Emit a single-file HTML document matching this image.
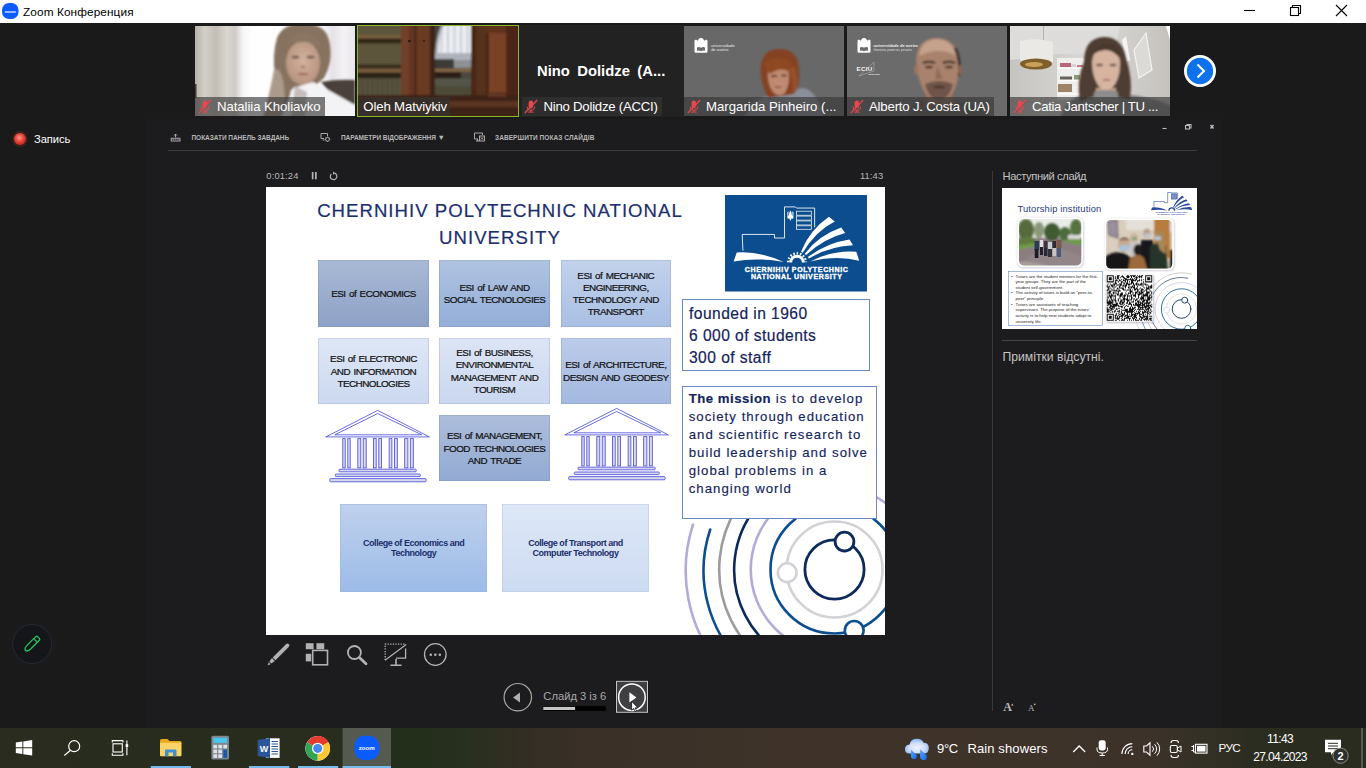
<!DOCTYPE html>
<html lang="uk">
<head>
<meta charset="utf-8">
<title>Zoom Конференция</title>
<style>
*{box-sizing:border-box;margin:0;padding:0}
html,body{width:1366px;height:768px;overflow:hidden;background:#1a1a1a;font-family:"Liberation Sans",sans-serif;}
.abs{position:absolute}
#titlebar{left:0;top:0;width:1366px;height:23px;background:#fff}
#titlebar .ttl{left:23px;top:4.5px;font-size:11.8px;letter-spacing:0.1px;color:#000;white-space:nowrap;line-height:15px}
#zoomarea{left:0;top:23px;width:1366px;height:705px;background:#1a1a1a}
.thumb{top:26px;width:160px;height:90px;overflow:hidden;background:#222}
.thumb .nm{left:0;bottom:0;height:19px;background:rgba(53,53,53,.64);color:#fff;font-size:13.2px;line-height:19px;white-space:nowrap;padding-left:22px;padding-right:4px}
.thumb .nm.nomic{padding-left:5px}
.thumb .mic{left:3.4px;bottom:2px;width:14px;height:15px}
#pv{left:146px;top:119px;width:1076px;height:609px;background:#1c1b1e}
.tb{color:#b6b6b6;font-size:6.5px;font-weight:bold;white-space:nowrap;line-height:10px;top:132.6px;letter-spacing:-0.05px}
#slide{left:265.5px;top:187px;width:619px;height:448px;background:#fff;overflow:hidden}
.box{-webkit-text-stroke:0.22px #111;padding-top:1.5px;word-spacing:1.2px;box-shadow:inset 0 0 0 0.6px rgba(90,110,160,.3);display:flex;align-items:center;justify-content:center;text-align:center;color:#111;font-size:9.9px;line-height:12.3px;letter-spacing:-0.52px}
.col{display:flex;align-items:center;justify-content:center;text-align:center;color:#1b2e6a;font-weight:bold;font-size:9px;line-height:10.6px;letter-spacing:-0.47px}
#taskbar{left:0;top:728px;width:1366px;height:40px;background:linear-gradient(90deg,#292c1e 0%,#282d1e 25%,#232e1b 30%,#27301e 34%,#332e24 38.500%,#3a3027 43%,#3f3329 60%,#3d3229 84%,#343026 88%,#2b2d21 92%,#292c1f 100%)}
</style>
</head>
<body>
<!-- TITLE BAR -->
<div id="titlebar" class="abs">
  <svg class="abs" style="left:2px;top:3px" width="17" height="17" viewBox="0 0 17 17"><rect x="0" y="0" width="16.5" height="16" rx="7" fill="#0b5cff"/><text x="8.2" y="9.6" font-size="4.2" font-weight="bold" fill="#fff" text-anchor="middle" font-family="Liberation Sans, sans-serif">zoom</text></svg>
  <div class="abs ttl">Zoom Конференция</div>
  <svg class="abs" style="left:1240px;top:0" width="126" height="23" viewBox="0 0 126 23"><g stroke="#000" stroke-width="1.1" fill="none"><path d="M4 10.5H15"/><rect x="50.5" y="7.5" width="8" height="8"/><path d="M52.5 7.5V5.5H60.500V13.5H58.5"/><path d="M96 5L107 16M107 5L96 16"/></g></svg>
</div>
<div id="zoomarea" class="abs"></div>
<!--THUMBS-->
<svg width="0" height="0" style="position:absolute"><defs>
<filter id="b1" x="-20%" y="-20%" width="140%" height="140%"><feGaussianBlur stdDeviation="1.2"/></filter>
<filter id="b2" x="-20%" y="-20%" width="140%" height="140%"><feGaussianBlur stdDeviation="2.2"/></filter>
<filter id="b05" x="-20%" y="-20%" width="140%" height="140%"><feGaussianBlur stdDeviation="0.5"/></filter>
<symbol id="mic" viewBox="0 0 14 15"><g fill="#e8474c"><rect x="4.6" y="1.6" width="4.6" height="8" rx="2.3"/><path d="M2.6 7.5a4.3 4.3 0 0 0 8.600 0h-1a3.300 3.300 0 0 1-6.600 0z"/><rect x="6.400" y="11" width="1" height="2"/><rect x="4.200" y="12.600" width="5.400" height="1"/></g><path d="M0.800 14L13.200 1" stroke="#e8474c" stroke-width="1.200"/><path d="M1.600 14.800L14 1.800" stroke="#555" stroke-width="0.700" opacity=".6"/></symbol>
<symbol id="castle" viewBox="0 0 14 15"><path d="M0.500 2.500L2 1.500L3.500 2.800L5.500 0.200L7 0L8.500 0.200L10.500 2.800L12 1.500L13.500 2.500V13.500Q13.500 14.800 12 14.800H2Q0.500 14.800 0.500 13.500Z" fill="#fff"/><path d="M3 9.500Q5 8.600 7 9.800Q9 8.600 11 9.500V12.800Q9 12 7 13.200Q5 12 3 12.800Z" fill="#6a6a6a"/></symbol>
</defs></svg>
<!-- thumb1 -->
<div class="abs thumb" style="left:195px">
<svg class="abs" style="left:0;top:0" width="160" height="90" viewBox="0 0 160 90">
<defs><linearGradient id="t1bg" x1="0" x2="1" y1="0" y2="0"><stop offset="0" stop-color="#b7b1a9"/><stop offset=".06" stop-color="#d3cfc9"/><stop offset=".13" stop-color="#c3bdb5"/><stop offset=".2" stop-color="#d9d5cf"/><stop offset=".25" stop-color="#cfcac6"/><stop offset=".3" stop-color="#f6f5f6"/><stop offset=".36" stop-color="#fefefe"/><stop offset=".78" stop-color="#fdfdfe"/><stop offset=".86" stop-color="#e6e2e8"/><stop offset=".93" stop-color="#f4f2f5"/><stop offset="1" stop-color="#e9e6ea"/></linearGradient>
<radialGradient id="t1f" cx=".5" cy=".45" r=".6"><stop offset="0" stop-color="#d2b19c"/><stop offset="1" stop-color="#b4917d"/></radialGradient></defs>
<rect width="160" height="90" fill="url(#t1bg)"/>
<g filter="url(#b1)">
<path d="M126 56Q142 53 160 54V80L136 68Z" fill="#4a413a"/>
<path d="M82 12Q88 -3 108 -2Q130 -3 134 14Q139 34 129 52L120 60L96 64L92 92H76Q78 70 80 50Q77 28 82 12Z" fill="#86725e"/>
<path d="M79 44Q86 40 89 60L91 92H68Q74 70 79 44Z" fill="#ab9a8c"/>
<ellipse cx="108" cy="37" rx="17" ry="22" fill="url(#t1f)"/>
<path d="M90 22Q96 6 110 6Q124 8 127 24Q118 14 108 16Q98 15 90 22Z" fill="#8a7662"/>
<path d="M98 62L118 56L128 61L160 79V92H86Z" fill="#f3f2f4"/>
<path d="M100 60L112 66L110 92H96Z" fill="#c5bebb"/>
<ellipse cx="100.500" cy="31" rx="4" ry="1.600" fill="#5c463c" opacity=".75"/><ellipse cx="115.500" cy="31" rx="4" ry="1.600" fill="#5c463c" opacity=".75"/>
<ellipse cx="108" cy="41" rx="2.500" ry="1.200" fill="#9a7666" opacity=".8"/>
<ellipse cx="108" cy="48" rx="5.500" ry="1.300" fill="#9a6458" opacity=".8"/>
</g>
<rect x="0" y="58" width="1.500" height="14" fill="#4a3c30"/>
</svg>
<div class="abs nm" style="width:130px;letter-spacing:-0.07px">Nataliia Kholiavko</div><svg class="abs mic"><use href="#mic"/></svg>
</div>
<!-- thumb2 -->
<div class="abs" style="left:357px;top:25px;width:162px;height:92px;background:#8ab82a"></div>
<div class="abs thumb" style="left:358.300px;top:26.300px;width:159.400px;height:89.400px">
<svg class="abs" style="left:0;top:0" width="160" height="90" viewBox="0 0 160 90">
<rect width="160" height="90" fill="#4a3826"/>
<defs><pattern id="bk" width="160" height="3.200" patternUnits="userSpaceOnUse"><rect width="160" height="3.200" fill="#625b3f"/><rect y="2.300" width="160" height="0.900" fill="#4a4430"/></pattern>
<pattern id="bk2" width="5" height="30" patternUnits="userSpaceOnUse"><rect width="5" height="30" fill="#57533e"/><rect x="4" width="1" height="30" fill="#454231"/></pattern>
<pattern id="cur" width="6.500" height="40" patternUnits="userSpaceOnUse"><rect width="6.500" height="40" fill="#eceef3"/><rect x="4.500" width="2" height="40" fill="#c9cdd6"/></pattern></defs>
<g filter="url(#b1)">
<rect x="-2" y="-2" width="46" height="74" fill="#564f36"/>
<rect x="-2" y="-2" width="46" height="11" fill="url(#bk)"/>
<rect x="-2" y="9.500" width="46" height="2.800" fill="#806340"/>
<rect x="-2" y="12.500" width="46" height="5" fill="#2e2619"/>
<rect x="-2" y="17.500" width="46" height="21" fill="url(#bk)"/>
<rect x="-2" y="38.500" width="46" height="4.500" fill="#3c3222"/>
<rect x="-2" y="43.300" width="46" height="3" fill="#80623e"/>
<rect x="-2" y="46.500" width="46" height="6" fill="#2c2318"/>
<rect x="-2" y="52.500" width="46" height="18" fill="url(#bk2)"/>
<rect x="74" y="-2" width="44" height="74" fill="#45433a"/>
<path d="M84 -2H114V42H77Q76 14 84 -2Z" fill="#aeb2ba"/>
<path d="M87 -2H114V27H80Q80 10 87 -2Z" fill="url(#cur)"/>
<rect x="76" y="33" width="20" height="9" fill="#3a3a38"/>
<rect x="96" y="34" width="18" height="8" fill="#8e9094"/>
<rect x="75" y="42.800" width="40" height="3" fill="#866844"/>
<rect x="75" y="46" width="28" height="6.500" fill="#2a1e18"/>
<rect x="103" y="46" width="12" height="6.500" fill="#4a4a40"/>
<rect x="75" y="52.500" width="40" height="8" fill="#55564a"/>
<rect x="75" y="60" width="40" height="9" fill="#4e4c38"/>
<rect x="43" y="-2" width="33" height="74" fill="#633620"/>
<rect x="43" y="-2" width="8" height="74" fill="#70412a"/>
<rect x="56" y="-2" width="3" height="74" fill="#4e2a1a"/>
<rect x="59" y="-2" width="13" height="74" fill="#693a23"/>
<rect x="72" y="-2" width="5" height="74" fill="#3e2418"/>
<rect x="113" y="-2" width="50" height="94" fill="#4a2616"/>
<rect x="118" y="-2" width="10" height="74" fill="#55301c"/>
<rect x="131" y="6" width="17" height="64" fill="#794326"/>
<rect x="127" y="-1" width="25" height="8" fill="#5e321e"/>
<rect x="148" y="-2" width="14" height="74" fill="#4c2817"/>
<rect x="-2" y="69" width="164" height="23" fill="#3d2419"/>
<rect x="90" y="75" width="72" height="6" fill="#5a3624"/>
<rect x="130" y="66" width="18" height="5" fill="#5e3520"/>
</g>
<circle cx="51.500" cy="15" r="1.300" fill="#24150e"/><circle cx="66" cy="15" r="1.100" fill="#32200f"/>
</svg>
<div class="abs nm nomic" style="width:91.500px;letter-spacing:-0.14px">Oleh Matviykiv</div>
</div>
<!-- thumb3 -->
<div class="abs" style="left:519px;top:24.500px;width:164.500px;height:92px;background:#222"></div>
<div class="abs thumb" style="left:520px;width:163px;background:#222">
<div class="abs" id="ninob" style="left:17px;top:36px;width:130px;color:#fff;font-weight:bold;font-size:14.800px;line-height:18px;white-space:nowrap;word-spacing:3.300px">Nino Dolidze (A...</div>
<div class="abs nm" style="left:1.500px;width:140px;letter-spacing:-0.24px">Nino Dolidze (ACCI)</div><svg class="abs mic" style="left:4.300px"><use href="#mic"/></svg>
</div>
<!-- thumb4 -->
<div class="abs thumb" style="left:684px;background:#686868">
<svg class="abs" style="left:0;top:0" width="160" height="90" viewBox="0 0 160 90">
<use href="#castle" x="10" y="12" width="14" height="15"/>
<text x="27" y="20.600" font-size="4.200" fill="#e8e8e8" font-family="Liberation Sans, sans-serif">universidade</text>
<text x="27" y="25.200" font-size="4.200" fill="#e8e8e8" font-family="Liberation Sans, sans-serif">de aveiro</text>
<g filter="url(#b1)">
<path d="M66 82Q78 68 96 68L118 62Q132 62 140 92H60Z" fill="#8a8e9a"/>
<path d="M77 38Q80 22 98 23Q113 24 115 42Q117 58 110 68L84 72Q75 54 77 38Z" fill="#854220"/>
<path d="M85 42Q95 35 104 43Q107 56 101 67Q93 73 87 63Q82 52 85 42Z" fill="#c08a72"/>
<path d="M80 38Q90 27 107 36L106 46Q96 40 86 48Z" fill="#8e4824"/>
<ellipse cx="90" cy="50" rx="3.500" ry="1.200" fill="#5a3628" opacity=".8"/><ellipse cx="100" cy="49.500" rx="3" ry="1.200" fill="#5a3628" opacity=".8"/>
<ellipse cx="94" cy="61" rx="3.500" ry="1.100" fill="#8a4a40" opacity=".8"/>
<path d="M104 44Q110 52 108 66L112 66Q116 52 110 40Z" fill="#96502a"/>
</g>
</svg>
<div class="abs nm" style="width:160px">Margarida Pinheiro (...</div><svg class="abs mic"><use href="#mic"/></svg>
</div>
<!-- thumb5 -->
<div class="abs thumb" style="left:847px;background:#6b6b6b">
<svg class="abs" style="left:0;top:0" width="160" height="90" viewBox="0 0 160 90">
<use href="#castle" x="10" y="12" width="14" height="15"/>
<text x="26.500" y="20.500" font-size="4.100" fill="#ededed" font-weight="bold" font-family="Liberation Sans, sans-serif">universidade de aveiro</text>
<text x="26.500" y="25" font-size="4.100" fill="#dcdcdc" font-family="Liberation Sans, sans-serif">theoria poiesis praxis</text>
<text x="9.500" y="45" font-size="6.200" fill="#f4f4f4" font-weight="bold" font-family="Liberation Sans, sans-serif" letter-spacing="0.300">ECIU</text>
<text x="21.500" y="49.200" font-size="2.400" fill="#eee" font-weight="bold" font-family="Liberation Sans, sans-serif">university</text>
<path d="M12 50L27 36V45Z" fill="none" stroke="#ddd" stroke-width="0.350"/>
<g filter="url(#b1)">
<path d="M60 92Q64 76 80 73H104Q124 77 146 92Z" fill="#5c5a58"/>
<path d="M76 60H106L108 80H78Z" fill="#86665a"/>
<path d="M69 34Q70 12 90 12Q110 12 112 36Q113 56 104 70Q92 78 80 70Q70 56 69 34Z" fill="#a8826c"/>
<path d="M72 30Q74 14 90 13Q106 14 109 30Q92 20 72 30Z" fill="#c4a28c"/>
<path d="M76 37Q82 34.500 88 37M96 37Q102 34.500 108 37" stroke="#2e221c" stroke-width="2.200" fill="none"/>
<ellipse cx="82" cy="41" rx="4" ry="1.600" fill="#3a2a22" opacity=".8"/><ellipse cx="102" cy="41" rx="4" ry="1.600" fill="#3a2a22" opacity=".8"/>
<path d="M90 40L88 53H96Z" fill="#8c6854" opacity=".8"/>
<path d="M78 58Q92 52 106 58Q102 74 92 74Q82 74 78 58Z" fill="#6e5448"/>
<ellipse cx="92" cy="61" rx="6" ry="1.300" fill="#4a3026"/>
<path d="M108 22Q114 34 112 50" stroke="#2e2622" stroke-width="2.500" fill="none"/>
<ellipse cx="69" cy="44" rx="2" ry="5" fill="#9a7460"/><ellipse cx="113" cy="44" rx="2" ry="5" fill="#8a6652"/>
</g>
</svg>
<div class="abs nm" style="width:147px;letter-spacing:-0.19px">Alberto J. Costa (UA)</div><svg class="abs mic"><use href="#mic"/></svg>
</div>
<!-- thumb6 -->
<div class="abs thumb" style="left:1010px;background:#cdcbc7">
<svg class="abs" style="left:0;top:0" width="160" height="90" viewBox="0 0 160 90">
<defs><linearGradient id="t6bg" x1="0" x2="1" y1="0" y2="0"><stop offset="0" stop-color="#c6c4c0"/><stop offset=".45" stop-color="#d8d7d4"/><stop offset=".7" stop-color="#d2d0cd"/><stop offset="1" stop-color="#c4c1bd"/></linearGradient></defs>
<rect width="160" height="90" fill="url(#t6bg)"/>
<g filter="url(#b05)">
<path d="M0 0H110L104 28H48L0 34Z" fill="#dddcda"/>
<path d="M156 0H160V14Z" fill="#fff"/>
<path d="M112 14L116 10L120 34L116 36Z" fill="#f4f4f4"/>
<rect x="47" y="32" width="28" height="42" fill="#eeeeec"/>
<rect x="50" y="37" width="11" height="4" fill="#b8667c"/><rect x="61" y="38" width="5" height="3" fill="#d8d4d4"/><rect x="67" y="39" width="6" height="2" fill="#c8788a"/>
<rect x="48" y="41.500" width="26" height="1.500" fill="#fafafa"/>
<rect x="50" y="50.500" width="12" height="3" fill="#6a625a"/><rect x="64" y="49" width="6" height="4.500" fill="#8a9a7a"/><rect x="48" y="54" width="26" height="1.500" fill="#fafafa"/>
<rect x="48" y="58" width="14" height="8" fill="#a08468"/><rect x="64" y="59" width="6" height="7" fill="#f2f2f2"/>
<rect x="48" y="67" width="26" height="1.500" fill="#fafafa"/>
<path d="M124 24L136 7L142 44L129 52Z" fill="#dcdad6" stroke="#f4f3f0" stroke-width="1.200"/>
<path d="M10 15Q26 11 43 16V36Q26 44 10 34Z" fill="#ebe9e5"/>
<ellipse cx="26" cy="38" rx="16" ry="5.500" fill="#7e5e2c"/>
<ellipse cx="24" cy="38.500" rx="9" ry="2.500" fill="#c9a256"/>
<rect x="33" y="0" width="0.800" height="14" fill="#aaa"/>
</g>
<g filter="url(#b1)">
<path d="M50 92Q56 72 76 68H112Q140 70 162 80V92Z" fill="#828180"/>
<path d="M74 36Q74 12 94 11Q112 11 116 32Q123 52 120 74L104 70H84L70 76Q66 54 74 36Z" fill="#4e3c32"/>
<path d="M86 62H106V74H86Z" fill="#c09c88"/>
<path d="M82 36Q84 20 96 20Q110 20 110 38Q110 54 102 62Q96 66 90 62Q82 52 82 36Z" fill="#d6b4a0"/>
<path d="M81 30Q88 16 100 18Q110 20 111 34Q104 24 96 24Q88 24 81 30Z" fill="#4a382e"/>
<ellipse cx="89.500" cy="39" rx="3.500" ry="1.300" fill="#4a362e" opacity=".8"/><ellipse cx="103" cy="39" rx="3.500" ry="1.300" fill="#4a362e" opacity=".8"/>
<ellipse cx="96.500" cy="54" rx="4" ry="1.100" fill="#a0605a" opacity=".8"/>
<path d="M84 66Q96 62 108 66V74H84Z" fill="#8c8c8c"/>
</g>
</svg>
<div class="abs nm" style="width:160px;letter-spacing:-0.35px">Catia Jantscher | TU ...</div><svg class="abs mic"><use href="#mic"/></svg>
</div>
<!-- next arrow -->
<svg class="abs" style="left:1183px;top:54px" width="34" height="34" viewBox="0 0 34 34"><circle cx="17" cy="17" r="16" fill="#fff"/><circle cx="17" cy="17" r="13.200" fill="#0e72ed"/><path d="M14.500 10.500L21 17L14.500 23.500" stroke="#fff" stroke-width="2" fill="none"/></svg>
<!-- recording -->
<svg class="abs" style="left:9.900px;top:129.300px" width="20" height="20" viewBox="0 0 20 20"><defs><radialGradient id="rec" cx=".45" cy=".4" r=".6"><stop offset="0" stop-color="#ff9a8a"/><stop offset=".55" stop-color="#e8473c"/><stop offset="1" stop-color="#b82a20"/></radialGradient></defs><circle cx="10" cy="10" r="8" fill="#7a2a1c" opacity=".35"/><circle cx="10" cy="10" r="6" fill="url(#rec)"/></svg>
<div class="abs" id="rectxt" style="left:34px;top:131.700px;color:#fff;font-size:11.200px;line-height:15px;white-space:nowrap;letter-spacing:-0.1px">Запись</div>
<!-- green pencil -->
<svg class="abs" style="left:12px;top:624px" width="40" height="40" viewBox="0 0 40 40"><circle cx="20.100" cy="19.900" r="19.500" fill="#14161a" stroke="#282e34" stroke-width="0.900"/><g transform="rotate(45 20 20)" fill="none" stroke="#23c55e" stroke-width="1.300" stroke-linejoin="round"><path d="M17.400 12.200Q17.400 10.900 18.700 10.900H21.300Q22.600 10.900 22.600 12.200V24.500Q22.400 28.800 20 29.200Q17.600 28.800 17.400 24.500Z"/><path d="M17.400 15H22.600"/></g></svg>
<!--/THUMBS-->
<!--PV-->
<div id="pv" class="abs"></div>
<!--PVCONTENT-->
<!-- presenter toolbar -->
<svg class="abs" style="left:170px;top:131px" width="12" height="12" viewBox="0 0 12 12"><g fill="none" stroke="#b8b8b8" stroke-width="0.9"><path d="M5.500 6.300V3M4 4.500L5.500 3L7 4.500"/><rect x="1.200" y="7.200" width="8.800" height="2.800"/><path d="M2.500 8.600H4M4.800 8.600H6.300M7.100 8.600H8.600" stroke-width="0.700"/></g></svg>
<div class="abs tb" style="left:191.500px">ПОКАЗАТИ ПАНЕЛЬ ЗАВДАНЬ</div>
<svg class="abs" style="left:320px;top:131px" width="12" height="12" viewBox="0 0 12 12"><g fill="none" stroke="#b8b8b8" stroke-width="0.9"><path d="M4 7.500H1V2.500H7.500V5"/><path d="M2.500 9H4.500"/><circle cx="7.500" cy="8.300" r="1.900"/><path d="M7.500 5.600V6.400M7.500 10.200V11M4.800 8.300H5.600M9.400 8.300H10.200M5.600 6.400L6.100 6.900M9.400 6.400L8.900 6.900M5.600 10.200L6.100 9.700M9.400 10.200L8.900 9.700"/></g></svg>
<div class="abs tb" style="left:341px">ПАРАМЕТРИ ВІДОБРАЖЕННЯ <span style="font-size:7.5px;line-height:5px;position:relative;top:0.3px">▼</span></div>
<svg class="abs" style="left:473px;top:131px" width="13" height="12" viewBox="0 0 13 12"><g fill="none" stroke="#b8b8b8" stroke-width="0.9"><path d="M5 8H1.500V2H9.500V4"/><path d="M3 10H6M4.500 8V10"/><rect x="6.500" y="5" width="5" height="5"/><path d="M7.800 6.300L10.200 8.700M10.200 6.300L7.800 8.700"/></g></svg>
<div class="abs tb" style="left:495px;letter-spacing:0.08px">ЗАВЕРШИТИ ПОКАЗ СЛАЙДІВ</div>
<div class="abs" style="left:168px;top:150px;width:1029px;height:1px;background:#3c3b3f"></div>
<svg class="abs" style="left:1155px;top:120px" width="66" height="14" viewBox="0 0 66 14"><g stroke="#bbb" stroke-width="1.100" fill="none"><path d="M7.500 8.500H11.500"/><rect x="30.500" y="5.500" width="4" height="3.500"/><path d="M32 5.500V4.500H36V8H34.500"/><path d="M55.500 5L58.500 8.500M58.500 5L55.500 8.500" stroke-width="1.400"/></g></svg>
<!-- timer -->
<div class="abs" id="tm1" style="left:266.300px;top:169.450px;color:#b8b8b8;font-size:9.400px;line-height:13px;white-space:nowrap;letter-spacing:0.130px">0:01:24</div>
<svg class="abs" style="left:310px;top:170px" width="30" height="12" viewBox="0 0 30 12"><g fill="#b4b4b4"><rect x="1.800" y="2" width="1.700" height="7.300"/><rect x="5" y="2" width="1.700" height="7.300"/></g><path d="M24.500 3.200A3.300 3.300 0 1 1 21.300 4" fill="none" stroke="#b4b4b4" stroke-width="1.200"/><path d="M23 1.500L25.300 3.300L23 4.800Z" fill="#b4b4b4"/></svg>
<div class="abs" id="tm2" style="left:840px;width:43.300px;text-align:right;top:169.450px;color:#b8b8b8;font-size:9.400px;line-height:13px;white-space:nowrap;letter-spacing:0.130px">11:43</div>
<!--/PVCONTENT-->
<!--SLIDE-->
<div id="slide" class="abs">
<!-- coordinates inside slide: page - (265.500,187) -->
<div class="abs" id="stitle" style="-webkit-text-stroke:0.2px #1c2f6e;left:19.500px;top:10.400px;width:430px;text-align:center;color:#1c2f6e;font-size:18.600px;line-height:27.100px;letter-spacing:1.020px">CHERNIHIV POLYTECHNIC NATIONAL<br>UNIVERSITY</div>
<!-- row1 -->
<div class="abs box" style="left:52.500px;top:73.200px;width:111px;height:66.500px;background:linear-gradient(#a9b9d5,#8ea2c7)"><span>ESI of ECONOMICS</span></div>
<div class="abs box" style="left:173.700px;top:73.200px;width:110.600px;height:66.500px;background:linear-gradient(#b0c3e1,#93aed8)"><span>ESI of LAW AND<br>SOCIAL TECNOLOGIES</span></div>
<div class="abs box" style="left:295px;top:73.200px;width:110.600px;height:66.500px;background:linear-gradient(#c3d2ec,#a9bfe3)"><span>ESI of MECHANIC<br>ENGINEERING,<br>TECHNOLOGY AND<br>TRANSPORT</span></div>
<!-- row2 -->
<div class="abs box" style="left:52.500px;top:151.200px;width:111px;height:65.600px;background:linear-gradient(#dfe7f6,#ccd9f0)"><span>ESI of ELECTRONIC<br>AND INFORMATION<br>TECHNOLOGIES</span></div>
<div class="abs box" style="left:173.700px;top:151.200px;width:110.600px;height:65.600px;background:linear-gradient(#dde5f5,#cad7ef)"><span>ESI of BUSINESS,<br>ENVIRONMENTAL<br>MANAGEMENT AND<br>TOURISM</span></div>
<div class="abs box" style="left:295px;top:151.200px;width:110.600px;height:65.600px;background:linear-gradient(#bccbe8,#a4b9e0)"><span>ESI of ARCHITECTURE,<br>DESIGN AND GEODESY</span></div>
<!-- row3 -->
<div class="abs box" style="left:173.700px;top:228.300px;width:110.600px;height:65.700px;background:linear-gradient(#adbddb,#93aad3)"><span>ESI of MANAGEMENT,<br>FOOD TECHNOLOGIES<br>AND TRADE</span></div>
<!-- temples -->
<svg class="abs" style="left:58px;top:221px" width="108" height="76" viewBox="0 0 108 76">
<defs><g id="temple" fill="none" stroke="#4547d9" stroke-width="0.800">
<path d="M1.800 28.900L53.700 2.400L105.400 28.900Z"/><path d="M10.800 26.800L53.700 5.500L97.700 26.800Z"/>
<g fill="#d8d8ec"><rect x="18.800" y="30.600" width="2.400" height="29.300"/><rect x="23.800" y="30.600" width="2.400" height="29.300"/>
<rect x="33.800" y="30.600" width="3" height="29.300"/><rect x="39.200" y="30.600" width="3" height="29.300"/>
<rect x="49.400" y="30.600" width="2.800" height="29.300"/><rect x="54.800" y="30.600" width="2.800" height="29.300"/>
<rect x="65.100" y="30.600" width="2.800" height="29.300"/><rect x="70.500" y="30.600" width="2.800" height="29.300"/>
<rect x="80.700" y="30.600" width="3.200" height="29.300"/><rect x="86.300" y="30.600" width="3" height="29.300"/>
<rect x="15" y="61.200" width="77.200" height="2.600" rx="0.800"/><rect x="11.300" y="66" width="85" height="2.600" rx="0.800"/><rect x="5.700" y="70.600" width="96.500" height="3.200" rx="1"/></g>
</g></defs><use href="#temple"/></svg>
<svg class="abs" style="left:297.200px;top:219px" width="108" height="76" viewBox="0 0 108 76"><use href="#temple"/></svg>
<!-- colleges -->
<div class="abs col" style="left:74.700px;top:317px;width:147px;height:88.300px;background:linear-gradient(#bfd1ed,#9cbbe8);box-shadow:inset 0 0 0 0.500px #9fb4d8"><span>College of Economics and<br>Technology</span></div>
<div class="abs col" style="left:236.500px;top:317px;width:147px;height:88.300px;background:linear-gradient(#dde7f7,#cddbf2);box-shadow:inset 0 0 0 0.500px #b9c8e4"><span>College of Transport and<br>Computer Technology</span></div>
<!-- circles -->
<svg class="abs" style="left:400px;top:280px" width="219" height="168" viewBox="400 280 219 168">
<g id="circs" fill="none" stroke-width="2.600" stroke-linecap="round">
<circle cx="568.500" cy="382.500" r="83.750" stroke="#b3aad9"/>
<circle cx="568.500" cy="382.500" r="64" stroke="#0c4e90"/>
<circle cx="568.500" cy="382.500" r="48" stroke="#d2d2d6"/>
<circle cx="568.500" cy="382.500" r="29.600" stroke="#0c2b5c" stroke-width="2.800"/>
<circle cx="578.500" cy="354.600" r="9.400" stroke="#0c2b5c" fill="#fff" stroke-width="2.800"/>
<circle cx="521.200" cy="385.700" r="9.400" stroke="#d2d2d6" fill="#fff"/>
<circle cx="588.200" cy="443.400" r="9.400" stroke="#0c4e90" fill="#fff"/>
<path d="M543 286.400A99.400 99.400 0 0 0 520 470" stroke="#0c2b5c"/>
<path d="M520 278A115 115 0 0 0 500 475" stroke="#9c9c9e"/>
<path d="M444.200 342.500A130.600 130.600 0 0 0 480 480" stroke="#0c4e90"/>
<path d="M427 337.600A149 149 0 0 0 455 480" stroke="#b3aad9"/>
</g></svg>
<!-- logo -->
<svg class="abs" style="left:459.500px;top:8.300px" width="142" height="96.500" viewBox="70 37 990 673">
<rect x="70" y="37" width="990" height="673" fill="#0b4d8f"/>
<g fill="none" stroke="#fff" stroke-width="6">
<path d="M195 425L190 312H415V337H485V120H560L568 128H695V262"/>
<g stroke-width="5"><rect x="568" y="150" width="104" height="28"/><rect x="568" y="184" width="104" height="28"/><rect x="568" y="218" width="104" height="28"/><rect x="568" y="252" width="104" height="24"/></g>
</g>
<g fill="#fff">
<path d="M505 155L512 150V185Q518 180 518 160L526 145L534 160Q534 180 540 185V150L547 155V200Q540 205 534 200L526 218L518 200Q512 205 505 200Z"/>
<path d="M130 500L152 438Q300 425 480 505Q300 470 130 500Z"/>
<path d="M600 432Q660 280 795 188L835 222Q700 290 612 440Z"/>
<path d="M625 448Q720 320 880 264L908 302Q760 340 635 455Z"/>
<path d="M648 470Q780 370 938 347L962 388Q800 395 655 480Z"/>
<path d="M665 500Q820 420 985 432L1006 495Q850 455 665 500Z"/>
<path d="M518 508A54 54 0 0 1 626 508L606 508 A34 34 0 0 0 538 508Z"/>
<g stroke="#fff" stroke-width="16" stroke-dasharray="11 12.500"><path d="M510 506A62 62 0 0 1 634 506" fill="none"/></g>
</g>
<text id="lg1" x="570" y="572.500" text-anchor="middle" fill="#fff" font-family="Liberation Sans, sans-serif" font-weight="bold" font-size="49" stroke="#fff" stroke-width="2.500" letter-spacing="4.500">CHERNIHIV POLYTECHNIC</text>
<text id="lg2" x="570" y="622.500" text-anchor="middle" fill="#fff" font-family="Liberation Sans, sans-serif" font-weight="bold" font-size="49" stroke="#fff" stroke-width="2.500" letter-spacing="4.400">NATIONAL UNIVERSITY</text>
</svg>
<!-- info boxes -->
<div class="abs" id="info1" style="left:416.500px;top:112.400px;width:188px;height:71.400px;border:1px solid #6a88c4;background:#fff;color:#14245c;-webkit-text-stroke:0.2px #14245c;font-size:15.600px;line-height:21.800px;letter-spacing:0.450px;padding:2.800px 0 0 6px;white-space:nowrap">founded in 1960<br>6 000 of students<br>300 of staff</div>
<div class="abs" id="info2" style="left:416.700px;top:199.300px;width:194.500px;height:133.200px;border:1px solid #6a88c4;background:#fff;color:#14245c;-webkit-text-stroke:0.15px #14245c;font-size:13.200px;line-height:18px;padding:3px 0 0 5.500px;white-space:nowrap;letter-spacing:1.030px"><b style="letter-spacing:0.5px">The mission</b> is to develop<br>society through education<br>and scientific research to<br>build leadership and solve<br>global problems in a<br>changing world</div>
</div>
<!--/SLIDE-->
<!--RIGHT-->
<div class="abs" style="left:992px;top:171px;width:1px;height:540px;background:#3a393d"></div>
<div class="abs" style="left:1002.500px;top:168.700px;color:#c2c2c2;font-size:11.200px;line-height:15px;letter-spacing:-0.400px;white-space:nowrap" id="nxt">Наступний слайд</div>
<div class="abs" id="nslide" style="left:1002px;top:188px;width:195.300px;height:141px;background:#fff;overflow:hidden">
<!-- coords: page-(1002,188) -->
<div class="abs" id="tut" style="left:15.500px;top:14.300px;color:#2b3a7c;font-size:9.400px;line-height:13px;white-space:nowrap;letter-spacing:0.140px">Tutorship institution</div>
<svg class="abs" style="left:0;top:0" width="195.300" height="141" viewBox="0 0 195.300 141">
<defs><filter id="sh" x="-10%" y="-10%" width="125%" height="125%"><feGaussianBlur stdDeviation="0.900"/></filter>
<clipPath id="p1"><rect x="17" y="31" width="62.300" height="46.400" rx="4.500"/></clipPath>
<clipPath id="p2"><rect x="104.200" y="31.900" width="66" height="48.700" rx="4.500"/></clipPath></defs>
<!-- mini logo -->
<g transform="translate(142.900,-1.140) scale(0.047)" fill="none" stroke="#3556a6" stroke-width="13">
<path d="M195 425L190 312H415V337H485V120H560L568 128H695V262"/>
<rect x="568" y="150" width="104" height="110" fill="#2a4a9a" fill-opacity=".6"/>
<g fill="#2a4a9a" stroke="none"><path d="M130 500L152 438Q300 425 480 505Q300 470 130 500Z"/><path d="M600 432Q660 280 795 188L835 222Q700 290 612 440Z"/><path d="M625 448Q720 320 880 264L908 302Q760 340 635 455Z"/><path d="M648 470Q780 370 938 347L962 388Q800 395 655 480Z"/><path d="M665 500Q820 420 985 432L1006 495Q850 455 665 500Z"/><path d="M498 508A74 74 0 0 1 646 508L618 508 A46 46 0 0 0 526 508Z"/></g>
</g>
<text x="169.500" y="24.700" text-anchor="middle" font-size="2.500" font-weight="bold" fill="#2a4a9a" font-family="Liberation Sans, sans-serif">CHERNIHIV POLYTECHNIC</text>
<text x="169.500" y="27.400" text-anchor="middle" font-size="2.500" font-weight="bold" fill="#2a4a9a" font-family="Liberation Sans, sans-serif">NATIONAL UNIVERSITY</text>
<!-- photo 1 -->
<rect x="15.600" y="29.800" width="66" height="50" rx="5.500" fill="#b9b7c6" filter="url(#sh)" opacity=".8"/>
<rect x="15.400" y="29.400" width="65.500" height="49.600" rx="5.500" fill="#fff"/>
<g clip-path="url(#p1)"><rect x="17" y="31" width="63" height="47" fill="#e9ece8"/>
<g filter="url(#b1)">
<rect x="14" y="50" width="70" height="30" fill="#8b7d80"/>
<path d="M14 78L40 60L58 60L84 70V82H14Z" fill="#938689"/>
<path d="M14 74Q30 72 50 80H14Z" fill="#a89e9a"/>
<ellipse cx="24" cy="42" rx="8" ry="11" fill="#566b3c"/><ellipse cx="37" cy="42" rx="5" ry="8" fill="#8a9a78"/><ellipse cx="50" cy="44" rx="8" ry="9" fill="#3f5a30"/><ellipse cx="63" cy="46" rx="6" ry="7" fill="#4e6a3c"/><ellipse cx="74" cy="40" rx="6" ry="9" fill="#58723f"/>
<ellipse cx="25" cy="54" rx="10" ry="5" fill="#5f7a3c"/>
<path d="M14 58L34 55V58L14 62Z" fill="#6da043"/><path d="M60 52L82 51V58L66 55Z" fill="#6c9c46"/>
<rect x="66" y="47" width="12" height="4" fill="#d8d8d4"/>
</g>
<g filter="url(#b05)"><rect x="32.500" y="53" width="4.500" height="9" fill="#2c3a58"/><rect x="32.800" y="61" width="3.600" height="9" fill="#1c1c22"/><rect x="38" y="52" width="3" height="7" fill="#e0dede"/><rect x="38" y="59" width="3" height="8" fill="#22222a"/><rect x="42" y="53" width="3.500" height="7" fill="#40343a"/><rect x="42" y="60" width="3.500" height="8" fill="#2a2a32"/><rect x="46" y="54" width="4" height="7" fill="#c8ccd8"/><rect x="46" y="61" width="4" height="8" fill="#30303a"/><rect x="50.500" y="53" width="3.500" height="7" fill="#2e2a30"/><rect x="50.500" y="60" width="3.500" height="8" fill="#c8c4c0"/><rect x="54.500" y="52" width="5" height="8" fill="#7a5a48"/><rect x="55" y="60" width="4" height="9" fill="#4a5a7a"/></g>
</g>
<!-- photo 2 -->
<rect x="103" y="30.800" width="69.500" height="52" rx="5.500" fill="#b9b7c6" filter="url(#sh)" opacity=".8"/>
<rect x="102.600" y="30.300" width="69.200" height="51.800" rx="5.500" fill="#fff"/>
<g clip-path="url(#p2)"><rect x="104" y="31" width="67" height="50" fill="#d9cebd"/>
<g filter="url(#b1)">
<rect x="124" y="30" width="30" height="12" fill="#e4e0d8"/>
<rect x="152" y="30" width="16" height="40" fill="#b87c3c"/><rect x="168" y="30" width="4" height="14" fill="#e8e8e4"/>
<path d="M106 33L115 32L116 50L107 47Z" fill="#9a90a0" stroke="#4a4038" stroke-width="0.800"/>
<ellipse cx="132" cy="50" rx="4" ry="5" fill="#cdb49c"/><rect x="128" y="54" width="9" height="14" fill="#c8c8c8"/>
<ellipse cx="145" cy="45" rx="3.500" ry="4.500" fill="#b89c86"/><path d="M139 52H151L152 82H138Z" fill="#16161a"/>
<ellipse cx="156" cy="48" rx="4" ry="5" fill="#caa88c"/><path d="M148 58Q156 52 164 58L166 82H148Z" fill="#27352a"/>
<path d="M152 44Q157 40 162 46L164 66L158 62Z" fill="#a8875a"/>
<ellipse cx="122" cy="57" rx="6" ry="7.500" fill="#c7a98f"/><path d="M116 53Q122 46 129 53Q122 50 116 53Z" fill="#5a4632"/>
<rect x="117.500" y="57" width="10" height="6" rx="2" fill="#a9c4dc"/>
<rect x="153" y="48.500" width="6" height="3.500" rx="1" fill="#b4cce0"/><rect x="143" y="45.500" width="5" height="3" rx="1" fill="#b8cee0"/><rect x="130" y="49" width="5" height="3" rx="1" fill="#7aa47a"/>
<path d="M102 70Q110 62 122 65L130 70L134 84H102Z" fill="#141416"/>
<ellipse cx="136" cy="62" rx="4.500" ry="6" fill="#1e1a1a"/>
<path d="M128 70Q136 64 142 70L146 84H126Z" fill="#9c6a3a"/>
<rect x="168" y="62" width="4" height="20" fill="#1a1a1e"/>
</g></g>
<!-- text box -->
<rect x="6.300" y="83.300" width="94.200" height="54" fill="#fff" stroke="#6a88c4" stroke-width="0.600"/>
<!-- circles mini -->
<g transform="translate(0.200,0.300) scale(0.3155)" fill="none" stroke-width="2.600" stroke-linecap="round">
<circle cx="568.500" cy="382.500" r="83.750" stroke="#b3aad9" stroke-width="1.600"/>
<circle cx="568.500" cy="382.500" r="64" stroke="#0c4e90"/>
<circle cx="568.500" cy="382.500" r="48" stroke="#d2d2d6" stroke-width="2"/>
<circle cx="568.500" cy="382.500" r="29.600" stroke="#0c2b5c" stroke-width="2.800"/>
<circle cx="578.500" cy="354.600" r="9.400" stroke="#0c2b5c" fill="#fff" stroke-width="2.800"/>
<circle cx="521.200" cy="385.700" r="9.400" stroke="#d2d2d6" fill="#fff" stroke-width="2"/>
<circle cx="588.200" cy="443.400" r="9.400" stroke="#0c4e90" fill="#fff"/>
<path d="M588 285A99.400 99.400 0 0 0 520 470" stroke="#0c2b5c" stroke-width="2"/>
<path d="M600 272A115 115 0 0 0 500 475" stroke="#9c9c9e" stroke-width="1.600"/>
<path d="M444.200 342.500A130.600 130.600 0 0 0 480 480" stroke="#0c4e90" stroke-width="2"/>
<path d="M427 337.600A149 149 0 0 0 455 480" stroke="#b3aad9" stroke-width="1.600"/>
</g>
<!-- QR -->
<rect x="104.300" y="87.300" width="47.500" height="47.500" fill="#9a98a8" filter="url(#sh)" opacity=".7"/>
<rect x="103.800" y="86.500" width="47.200" height="47.200" fill="#fff"/>
<g transform="translate(104.700,87.300) scale(1.012)"><path fill="#111" d="M0 0h7v1h-7zM10 0h3v1h-3zM15 0h1v1h-1zM20 0h2v1h-2zM23 0h6v1h-6zM30 0h1v1h-1zM32 0h1v1h-1zM34 0h2v1h-2zM38 0h7v1h-7zM0 1h1v1h-1zM6 1h1v1h-1zM8 1h1v1h-1zM10 1h2v1h-2zM14 1h3v1h-3zM19 1h4v1h-4zM24 1h1v1h-1zM26 1h2v1h-2zM29 1h1v1h-1zM31 1h4v1h-4zM38 1h1v1h-1zM44 1h1v1h-1zM0 2h1v1h-1zM2 2h3v1h-3zM6 2h1v1h-1zM8 2h1v1h-1zM10 2h2v1h-2zM13 2h1v1h-1zM16 2h2v1h-2zM20 2h2v1h-2zM24 2h1v1h-1zM28 2h3v1h-3zM32 2h1v1h-1zM34 2h1v1h-1zM38 2h1v1h-1zM40 2h3v1h-3zM44 2h1v1h-1zM0 3h1v1h-1zM2 3h3v1h-3zM6 3h1v1h-1zM8 3h1v1h-1zM10 3h2v1h-2zM17 3h3v1h-3zM23 3h1v1h-1zM25 3h1v1h-1zM27 3h1v1h-1zM29 3h1v1h-1zM38 3h1v1h-1zM40 3h3v1h-3zM44 3h1v1h-1zM0 4h1v1h-1zM2 4h3v1h-3zM6 4h1v1h-1zM9 4h1v1h-1zM12 4h1v1h-1zM14 4h1v1h-1zM16 4h1v1h-1zM18 4h9v1h-9zM28 4h2v1h-2zM32 4h1v1h-1zM34 4h1v1h-1zM36 4h1v1h-1zM38 4h1v1h-1zM40 4h3v1h-3zM44 4h1v1h-1zM0 5h1v1h-1zM6 5h1v1h-1zM8 5h3v1h-3zM12 5h2v1h-2zM16 5h3v1h-3zM20 5h1v1h-1zM24 5h5v1h-5zM30 5h3v1h-3zM34 5h1v1h-1zM38 5h1v1h-1zM44 5h1v1h-1zM0 6h7v1h-7zM8 6h1v1h-1zM11 6h1v1h-1zM14 6h2v1h-2zM18 6h1v1h-1zM20 6h1v1h-1zM22 6h1v1h-1zM24 6h2v1h-2zM30 6h1v1h-1zM36 6h1v1h-1zM38 6h7v1h-7zM8 7h2v1h-2zM14 7h1v1h-1zM16 7h2v1h-2zM19 7h2v1h-2zM24 7h3v1h-3zM29 7h1v1h-1zM34 7h1v1h-1zM36 7h1v1h-1zM1 8h1v1h-1zM3 8h1v1h-1zM6 8h4v1h-4zM12 8h3v1h-3zM17 8h1v1h-1zM19 8h6v1h-6zM26 8h1v1h-1zM28 8h4v1h-4zM33 8h3v1h-3zM37 8h2v1h-2zM0 9h1v1h-1zM4 9h2v1h-2zM7 9h1v1h-1zM10 9h2v1h-2zM13 9h2v1h-2zM16 9h1v1h-1zM18 9h2v1h-2zM21 9h2v1h-2zM26 9h2v1h-2zM29 9h1v1h-1zM31 9h4v1h-4zM36 9h1v1h-1zM38 9h3v1h-3zM44 9h1v1h-1zM0 10h1v1h-1zM2 10h1v1h-1zM4 10h4v1h-4zM9 10h1v1h-1zM12 10h2v1h-2zM15 10h5v1h-5zM25 10h1v1h-1zM27 10h1v1h-1zM30 10h1v1h-1zM35 10h1v1h-1zM41 10h1v1h-1zM43 10h2v1h-2zM0 11h3v1h-3zM5 11h1v1h-1zM8 11h1v1h-1zM12 11h1v1h-1zM18 11h1v1h-1zM21 11h7v1h-7zM30 11h1v1h-1zM36 11h1v1h-1zM39 11h1v1h-1zM41 11h4v1h-4zM1 12h1v1h-1zM3 12h1v1h-1zM6 12h2v1h-2zM10 12h1v1h-1zM12 12h5v1h-5zM18 12h1v1h-1zM21 12h1v1h-1zM24 12h1v1h-1zM26 12h2v1h-2zM29 12h1v1h-1zM33 12h1v1h-1zM37 12h1v1h-1zM39 12h3v1h-3zM43 12h2v1h-2zM1 13h2v1h-2zM4 13h1v1h-1zM10 13h2v1h-2zM15 13h2v1h-2zM22 13h2v1h-2zM27 13h4v1h-4zM32 13h1v1h-1zM34 13h2v1h-2zM39 13h4v1h-4zM0 14h2v1h-2zM5 14h3v1h-3zM9 14h1v1h-1zM12 14h1v1h-1zM16 14h3v1h-3zM20 14h2v1h-2zM23 14h1v1h-1zM25 14h1v1h-1zM27 14h2v1h-2zM30 14h2v1h-2zM34 14h3v1h-3zM38 14h2v1h-2zM0 15h1v1h-1zM2 15h3v1h-3zM7 15h7v1h-7zM19 15h1v1h-1zM22 15h3v1h-3zM30 15h1v1h-1zM33 15h2v1h-2zM37 15h1v1h-1zM39 15h1v1h-1zM42 15h2v1h-2zM2 16h2v1h-2zM6 16h1v1h-1zM11 16h1v1h-1zM23 16h3v1h-3zM28 16h5v1h-5zM34 16h3v1h-3zM39 16h3v1h-3zM44 16h1v1h-1zM0 17h4v1h-4zM6 17h4v1h-4zM11 17h1v1h-1zM14 17h2v1h-2zM18 17h1v1h-1zM21 17h3v1h-3zM26 17h1v1h-1zM28 17h2v1h-2zM32 17h4v1h-4zM39 17h4v1h-4zM44 17h1v1h-1zM2 18h1v1h-1zM4 18h1v1h-1zM6 18h1v1h-1zM10 18h2v1h-2zM13 18h3v1h-3zM19 18h1v1h-1zM21 18h1v1h-1zM23 18h1v1h-1zM25 18h1v1h-1zM28 18h1v1h-1zM30 18h5v1h-5zM36 18h1v1h-1zM38 18h3v1h-3zM44 18h1v1h-1zM0 19h1v1h-1zM2 19h1v1h-1zM4 19h2v1h-2zM8 19h1v1h-1zM10 19h2v1h-2zM13 19h3v1h-3zM17 19h2v1h-2zM20 19h1v1h-1zM24 19h1v1h-1zM26 19h3v1h-3zM31 19h2v1h-2zM35 19h6v1h-6zM42 19h2v1h-2zM2 20h7v1h-7zM12 20h3v1h-3zM16 20h3v1h-3zM20 20h5v1h-5zM26 20h3v1h-3zM31 20h1v1h-1zM34 20h1v1h-1zM36 20h5v1h-5zM42 20h1v1h-1zM44 20h1v1h-1zM0 21h2v1h-2zM3 21h2v1h-2zM8 21h1v1h-1zM13 21h1v1h-1zM15 21h1v1h-1zM17 21h1v1h-1zM20 21h1v1h-1zM24 21h1v1h-1zM28 21h1v1h-1zM31 21h1v1h-1zM34 21h3v1h-3zM40 21h3v1h-3zM44 21h1v1h-1zM1 22h1v1h-1zM3 22h2v1h-2zM6 22h1v1h-1zM8 22h1v1h-1zM12 22h1v1h-1zM16 22h2v1h-2zM20 22h1v1h-1zM22 22h1v1h-1zM24 22h2v1h-2zM31 22h1v1h-1zM33 22h4v1h-4zM38 22h1v1h-1zM40 22h5v1h-5zM0 23h1v1h-1zM4 23h1v1h-1zM8 23h1v1h-1zM11 23h1v1h-1zM13 23h1v1h-1zM16 23h5v1h-5zM24 23h1v1h-1zM26 23h2v1h-2zM29 23h2v1h-2zM33 23h4v1h-4zM40 23h3v1h-3zM0 24h1v1h-1zM2 24h1v1h-1zM4 24h5v1h-5zM11 24h1v1h-1zM14 24h4v1h-4zM19 24h6v1h-6zM28 24h2v1h-2zM32 24h1v1h-1zM34 24h1v1h-1zM36 24h7v1h-7zM44 24h1v1h-1zM0 25h1v1h-1zM2 25h2v1h-2zM5 25h1v1h-1zM8 25h2v1h-2zM11 25h1v1h-1zM13 25h2v1h-2zM17 25h1v1h-1zM20 25h2v1h-2zM26 25h1v1h-1zM28 25h1v1h-1zM30 25h2v1h-2zM35 25h3v1h-3zM39 25h2v1h-2zM0 26h7v1h-7zM8 26h1v1h-1zM13 26h5v1h-5zM20 26h1v1h-1zM22 26h1v1h-1zM24 26h3v1h-3zM30 26h4v1h-4zM35 26h2v1h-2zM39 26h2v1h-2zM42 26h2v1h-2zM0 27h6v1h-6zM9 27h2v1h-2zM12 27h2v1h-2zM15 27h2v1h-2zM19 27h2v1h-2zM22 27h2v1h-2zM28 27h2v1h-2zM31 27h1v1h-1zM33 27h3v1h-3zM37 27h6v1h-6zM1 28h3v1h-3zM5 28h6v1h-6zM13 28h3v1h-3zM17 28h1v1h-1zM21 28h4v1h-4zM26 28h1v1h-1zM28 28h6v1h-6zM35 28h3v1h-3zM39 28h1v1h-1zM41 28h1v1h-1zM44 28h1v1h-1zM0 29h2v1h-2zM3 29h2v1h-2zM6 29h6v1h-6zM16 29h1v1h-1zM19 29h1v1h-1zM24 29h1v1h-1zM26 29h12v1h-12zM39 29h5v1h-5zM3 30h7v1h-7zM11 30h5v1h-5zM18 30h1v1h-1zM20 30h2v1h-2zM24 30h1v1h-1zM30 30h3v1h-3zM35 30h1v1h-1zM37 30h5v1h-5zM43 30h2v1h-2zM0 31h1v1h-1zM2 31h2v1h-2zM5 31h3v1h-3zM14 31h2v1h-2zM17 31h1v1h-1zM23 31h1v1h-1zM25 31h1v1h-1zM27 31h2v1h-2zM31 31h9v1h-9zM41 31h2v1h-2zM44 31h1v1h-1zM0 32h1v1h-1zM3 32h3v1h-3zM7 32h1v1h-1zM9 32h1v1h-1zM11 32h2v1h-2zM17 32h1v1h-1zM22 32h2v1h-2zM25 32h3v1h-3zM31 32h1v1h-1zM33 32h1v1h-1zM35 32h1v1h-1zM38 32h1v1h-1zM40 32h3v1h-3zM0 33h3v1h-3zM4 33h3v1h-3zM9 33h2v1h-2zM14 33h1v1h-1zM18 33h3v1h-3zM22 33h5v1h-5zM28 33h1v1h-1zM30 33h7v1h-7zM38 33h4v1h-4zM43 33h1v1h-1zM0 34h2v1h-2zM3 34h2v1h-2zM8 34h1v1h-1zM12 34h1v1h-1zM15 34h6v1h-6zM22 34h4v1h-4zM27 34h1v1h-1zM32 34h1v1h-1zM37 34h1v1h-1zM39 34h1v1h-1zM41 34h1v1h-1zM43 34h1v1h-1zM0 35h3v1h-3zM5 35h1v1h-1zM7 35h2v1h-2zM10 35h3v1h-3zM14 35h1v1h-1zM18 35h9v1h-9zM29 35h1v1h-1zM31 35h1v1h-1zM33 35h1v1h-1zM35 35h1v1h-1zM37 35h2v1h-2zM40 35h2v1h-2zM44 35h1v1h-1zM0 36h2v1h-2zM3 36h1v1h-1zM5 36h1v1h-1zM7 36h1v1h-1zM12 36h1v1h-1zM14 36h1v1h-1zM17 36h1v1h-1zM19 36h7v1h-7zM27 36h1v1h-1zM31 36h2v1h-2zM35 36h6v1h-6zM42 36h2v1h-2zM9 37h1v1h-1zM11 37h1v1h-1zM14 37h2v1h-2zM17 37h1v1h-1zM20 37h1v1h-1zM24 37h1v1h-1zM28 37h5v1h-5zM35 37h2v1h-2zM40 37h2v1h-2zM43 37h1v1h-1zM0 38h7v1h-7zM9 38h1v1h-1zM12 38h2v1h-2zM15 38h3v1h-3zM20 38h1v1h-1zM22 38h1v1h-1zM24 38h5v1h-5zM30 38h1v1h-1zM32 38h3v1h-3zM36 38h1v1h-1zM38 38h1v1h-1zM40 38h1v1h-1zM42 38h1v1h-1zM0 39h1v1h-1zM6 39h1v1h-1zM8 39h2v1h-2zM11 39h1v1h-1zM14 39h3v1h-3zM18 39h3v1h-3zM24 39h2v1h-2zM27 39h3v1h-3zM32 39h1v1h-1zM35 39h2v1h-2zM40 39h1v1h-1zM0 40h1v1h-1zM2 40h3v1h-3zM6 40h1v1h-1zM8 40h1v1h-1zM10 40h1v1h-1zM12 40h4v1h-4zM17 40h2v1h-2zM20 40h5v1h-5zM26 40h3v1h-3zM32 40h2v1h-2zM36 40h5v1h-5zM42 40h3v1h-3zM0 41h1v1h-1zM2 41h3v1h-3zM6 41h1v1h-1zM8 41h1v1h-1zM10 41h1v1h-1zM12 41h1v1h-1zM15 41h1v1h-1zM19 41h3v1h-3zM25 41h1v1h-1zM27 41h3v1h-3zM33 41h5v1h-5zM39 41h2v1h-2zM0 42h1v1h-1zM2 42h3v1h-3zM6 42h1v1h-1zM8 42h5v1h-5zM14 42h1v1h-1zM17 42h7v1h-7zM25 42h3v1h-3zM29 42h1v1h-1zM32 42h1v1h-1zM34 42h2v1h-2zM38 42h3v1h-3zM42 42h3v1h-3zM0 43h1v1h-1zM6 43h1v1h-1zM10 43h2v1h-2zM15 43h1v1h-1zM17 43h1v1h-1zM22 43h1v1h-1zM26 43h1v1h-1zM28 43h1v1h-1zM32 43h1v1h-1zM34 43h1v1h-1zM36 43h5v1h-5zM42 43h2v1h-2zM0 44h7v1h-7zM8 44h2v1h-2zM12 44h1v1h-1zM14 44h4v1h-4zM20 44h1v1h-1zM22 44h1v1h-1zM24 44h1v1h-1zM26 44h1v1h-1zM28 44h4v1h-4zM33 44h2v1h-2zM37 44h1v1h-1zM39 44h1v1h-1zM41 44h1v1h-1zM43 44h2v1h-2z"/></g>

</svg>
<div class="abs" id="tuttext" style="left:9px;top:85.500px;width:92px;color:#1a1a1a;font-size:4.350px;line-height:5.630px;white-space:nowrap;padding-left:4.600px">
<span style="position:absolute;left:0">•</span>Tutors are the student mentors for the first-<br>year groups. They are the part of the<br>student self-government.<br><span style="position:absolute;left:0">•</span>The activity of tutors is build on “peer-to-<br>peer” principle.<br><span style="position:absolute;left:0">•</span>Tutors are assistants of teaching<br>supervisors. The purpose of the tutors’<br>activity is to help new students adapt to<br>university life.</div>
</div>
<div class="abs" style="left:1002px;top:339.500px;width:195px;height:1px;background:#444347"></div>
<div class="abs" id="notes" style="left:1002.500px;top:349px;color:#c4c4c4;font-size:12.200px;line-height:16px;white-space:nowrap">Примітки відсутні.</div>
<!-- A A -->
<div class="abs" id="aa1" style="left:1003.300px;top:700px;color:#b8b8b8;font-family:'Liberation Serif',serif;font-weight:bold;font-size:12px;line-height:15px;white-space:nowrap">A</div>
<div class="abs" id="aa2" style="left:1028px;top:701.200px;color:#b0b0b0;font-family:'Liberation Serif',serif;font-size:9px;line-height:15px;white-space:nowrap">A</div>
<svg class="abs" style="left:1010px;top:702.600px" width="28" height="4" viewBox="0 0 28 4"><path d="M1 2.600L2.300 0.800L3.600 2.600Z" fill="#c4c4c4"/><path d="M23.600 0.800L24.800 2.400L26 0.800Z" fill="#c4c4c4"/></svg>
<!--/RIGHT-->
<!--BOTTOM-->
<!-- bottom tools -->
<svg class="abs" style="left:262px;top:640px" width="190" height="30" viewBox="262 640 190 30">
<g fill="#b2b2b2" stroke="none">
<!-- pen -->
<path d="M286 644.200Q287.500 643 288.800 644.300Q289.900 645.600 288.700 647L275.500 660.200L272.700 657.400Z"/>
<path d="M272 658.100L274.800 660.900L271.300 663.600L269.300 661.600Z"/>
<path d="M268.700 662.300L270.600 664.200L267.600 665.300Z"/>
<!-- grid -->
<rect x="305.800" y="643.200" width="7.800" height="6"/><rect x="316.400" y="643.200" width="7.800" height="6"/><rect x="305.800" y="653.800" width="5.400" height="7.600"/>
<rect x="312.700" y="650.400" width="14.800" height="14.400" fill="#1c1b1e" stroke="#b2b2b2" stroke-width="1.600"/>
</g>
<g fill="none" stroke="#b2b2b2">
<!-- magnifier -->
<circle cx="354.400" cy="652.500" r="6.500" stroke-width="1.800"/><path d="M359.600 657.700L366 663.800" stroke-width="2.800" stroke-linecap="round"/>
<!-- screen -->
<path d="M385.200 660V644.200H405.600" stroke-width="1.300" stroke-dasharray="1.300 1.300"/>
<path d="M405.600 648.500V658.200H396" stroke-width="1.300"/>
<path d="M385 660.300L406.200 644.400" stroke-width="1.200"/>
<path d="M396 659V665M390.500 665.300H401.500" stroke-width="1.600"/>
<!-- more -->
<circle cx="435.300" cy="654.500" r="10.800" stroke-width="1.300"/>
</g>
<g fill="#b2b2b2"><circle cx="430.800" cy="654.700" r="1.300"/><circle cx="435.300" cy="654.700" r="1.300"/><circle cx="439.800" cy="654.700" r="1.300"/></g>
</svg>
<!-- nav -->
<svg class="abs" style="left:500px;top:678px" width="155" height="40" viewBox="500 678 155 40">
<circle cx="517.800" cy="697.200" r="13.700" fill="none" stroke="#a8a8a8" stroke-width="1.200"/>
<path d="M513 697.400L520 692.400V702.400Z" fill="#b0b0b0"/>
<rect x="543.300" y="706.100" width="62.800" height="4.700" fill="#000"/>
<rect x="543.300" y="706.900" width="31.800" height="3.100" fill="#c6c6c6"/>
<rect x="615.500" y="680.300" width="33" height="33" fill="#0e0e10"/>
<rect x="616.500" y="681.300" width="31" height="31" fill="#3f3f41" stroke="#c6c6c6" stroke-width="1"/>
<circle cx="631.900" cy="697.200" r="13.300" fill="none" stroke="#fff" stroke-width="1.500"/>
<path d="M629.400 692.300V702.400L636.400 697.400Z" fill="#fff"/>
<path d="M631.600 701.300V710.300L633.600 708.400L635.200 711.600L636.600 710.900L635.100 707.900L637.800 707.700Z" fill="#fff" stroke="#000" stroke-width="0.700"/>
</svg>
<div class="abs" id="slnum" style="left:543.300px;top:689px;color:#a9a9a9;font-size:11.200px;line-height:14px;white-space:nowrap">Слайд 3 із 6</div>
<!--/BOTTOM-->
<!--TASKBAR-->
<div id="taskbar" class="abs"></div>
<svg class="abs" style="left:0;top:728px" width="1366" height="40" viewBox="0 728 1366 40">
<!-- active zoom highlight -->
<rect x="342.600" y="728" width="48.400" height="40" fill="#555a50"/>
<g fill="#76b9ed"><rect x="150.800" y="766" width="40.200" height="2"/><rect x="248.900" y="766" width="40.400" height="2"/><rect x="298" y="766" width="40.200" height="2"/><rect x="342.600" y="766" width="48.400" height="2"/></g>
<!-- windows -->
<g fill="#fff"><path d="M15.800 742.400L22.400 741.500V747.300H15.800Z"/><path d="M23.300 741.400L32.200 740.100V747.300H23.300Z"/><path d="M15.800 748.200H22.400V754L15.800 753.100Z"/><path d="M23.300 748.200H32.200V755.500L23.300 754.200Z"/></g>
<!-- search -->
<circle cx="74.200" cy="746.200" r="5.500" fill="none" stroke="#fff" stroke-width="1.200"/><path d="M70.500 750.300L64.300 755.600" stroke="#fff" stroke-width="1.300"/>
<!-- task view -->
<g fill="none" stroke="#fff" stroke-width="1.100"><rect x="113" y="743.800" width="9.300" height="8.200"/><path d="M112.300 742.500V740.600H122.900V742.500M112.300 753.300V755.200H122.900V753.300"/><path d="M126.900 740.500V755.200"/></g><rect x="125.600" y="744.200" width="2.600" height="2.800" fill="#fff"/>
<!-- explorer -->
<path d="M160 740.500Q160 739 161.500 739H167.500L169.500 741H180Q181.500 741 181.500 742.500V744H160Z" fill="#e8a91c"/>
<rect x="160" y="742.700" width="21.500" height="13.500" rx="1" fill="#fbd466"/>
<path d="M165 756.200V750.500Q165 749.500 166 749.500H175.500Q176.500 749.500 176.500 750.500V756.200H173V752.500H168.500V756.200Z" fill="#3d8fd8"/>
<!-- calculator -->
<rect x="211.400" y="735.800" width="17.600" height="23.600" rx="1.500" fill="#7d8790"/>
<rect x="213.300" y="737.800" width="13.800" height="5" fill="#48c6f0"/>
<g fill="#dfe3e6"><rect x="213.300" y="744.800" width="3.800" height="3.600"/><rect x="218.300" y="744.800" width="3.800" height="3.600"/><rect x="213.300" y="749.600" width="3.800" height="3.600"/><rect x="218.300" y="749.600" width="3.800" height="3.600"/><rect x="213.300" y="754.300" width="3.800" height="3.600"/><rect x="218.300" y="754.300" width="3.800" height="3.600"/></g>
<rect x="223.300" y="744.800" width="3.800" height="3.600" fill="#dfe3e6"/><rect x="223.300" y="749.600" width="3.800" height="8.300" fill="#1d5aa6"/>
<!-- word -->
<rect x="266" y="738.300" width="13.600" height="19.600" fill="#fff"/>
<g stroke="#2b579a" stroke-width="1"><path d="M271.500 741.500H278M271.500 744H278M271.500 746.500H278M271.500 749H278M271.500 751.500H278M271.500 754H278"/></g>
<path d="M257.700 740L270 738V758L257.700 756Z" fill="#2b579a"/>
<text x="263.900" y="751.600" text-anchor="middle" font-family="Liberation Sans, sans-serif" font-weight="bold" font-size="9" fill="#fff">W</text>
<!-- chrome -->
<circle cx="317.700" cy="748.400" r="12.300" fill="#fff"/>
<path d="M317.700 748.400L307.050 742.250A12.300 12.300 0 0 1 328.350 742.250Z" fill="#e33b2e"/>
<path d="M317.700 736.100A12.300 12.300 0 0 1 328.350 742.250H317.700Z" fill="#e33b2e"/>
<path d="M328.350 742.250A12.300 12.300 0 0 1 317.700 760.700L317.700 748.400Z" fill="#fcc934"/>
<path d="M317.700 760.700A12.300 12.300 0 0 1 307.050 742.250L317.700 748.400Z" fill="#30a652"/>
<path d="M317.700 748.400L323 751.500L317.700 760.700Z" fill="#fcc934"/>
<circle cx="317.700" cy="748.400" r="5.700" fill="#fff"/><circle cx="317.700" cy="748.400" r="4.500" fill="#4688f1"/>
<!-- zoom -->
<rect x="354.300" y="735.800" width="25" height="24.300" rx="10" fill="#0b5cff"/>
<text x="366.800" y="750" text-anchor="middle" font-family="Liberation Sans, sans-serif" font-weight="bold" font-size="6.200" fill="#fff">zoom</text>
<!-- weather -->
<defs><radialGradient id="cl" cx=".5" cy=".62" r=".62"><stop offset="0" stop-color="#eef3fc"/><stop offset=".55" stop-color="#cfdef8"/><stop offset="1" stop-color="#7eaef0"/></radialGradient>
<linearGradient id="dr" x1="0" x2="1" y1="0" y2="1"><stop offset="0" stop-color="#5aa2fb"/><stop offset="1" stop-color="#0f6ef5"/></linearGradient></defs>
<g><path d="M909.500 753.500Q905 753.500 905 749.200Q905 745 909.600 744.600Q910.500 738.700 917 738.700Q922 738.700 923.600 742.800Q928.800 742.800 928.800 748Q928.800 753.500 924 753.500Z" fill="url(#cl)"/>
<path d="M911 749.700L916.600 755Q917.600 758.900 914 758.900Q910.900 758.900 910.900 755.500Z" fill="url(#dr)"/><path d="M920.200 749.200L926.600 755.600Q927.600 760 923.600 760Q920.100 760 920.100 756Z" fill="url(#dr)"/></g>
<!-- tray -->
<g fill="none" stroke="#fff" stroke-width="1.300">
<path d="M1073.200 752L1079.200 746L1085.200 752"/>
<rect x="1098.700" y="740.200" width="7" height="10.200" rx="2.400" fill="#fff" stroke="none"/><path d="M1097 747.500V749.500Q1097 753 1102.200 753Q1107.500 753 1107.500 749.500V747.500M1102.200 753V755.300M1099.600 755.500H1104.800" stroke-width="1"/>
<path d="M1128.100 754A4.200 4.200 0 0 1 1132.300 749.800M1125.100 754A7.200 7.200 0 0 1 1132.300 746.800M1121.900 754A10.400 10.400 0 0 1 1132.300 743.600" stroke-width="1.100"/><circle cx="1132.300" cy="753.900" r="1.200" fill="#fff" stroke="none"/>
<path d="M1143.800 746H1146.500L1150 742.800V755.200L1146.500 752H1143.800Z" stroke-width="1.100"/><path d="M1152.300 746.300A3.800 3.800 0 0 1 1152.300 751.700M1154.600 744.300A6.600 6.600 0 0 1 1154.600 753.700M1156.900 742.300A9.500 9.500 0 0 1 1156.900 755.700" stroke-width="1"/>
<path d="M1171 743Q1171 740.500 1173.500 740.500H1176Q1178.500 740.500 1178.500 743M1171 755Q1171 757.500 1173.500 757.500H1176Q1178.500 757.500 1178.500 755" stroke-width="1.100"/><rect x="1170.300" y="745.500" width="7" height="7" rx="1.500" stroke-width="1.100"/><path d="M1177.500 748L1181 746V752L1177.500 750Z" stroke-width="1"/>
<rect x="1195.500" y="744.300" width="11.500" height="8.800" stroke-width="1.100"/><rect x="1197" y="745.800" width="8.500" height="5.800" fill="#fff" stroke="none"/><path d="M1191.400 746.500H1193.500M1191.400 750.500H1193.500M1193.500 745V752H1195.500" stroke-width="1"/>
</g>
<!-- notification -->
<path d="M1325 739.800H1341V752.200H1333.500L1331 755V752.200H1325Z" fill="#fff"/>
<g stroke="#2b2d21" stroke-width="1"><path d="M1328 743.300H1338M1328 746H1338M1328 748.700H1338"/></g>
<circle cx="1340.600" cy="755.700" r="7.600" fill="#2f2f2c" stroke="#8c8c88" stroke-width="1"/>
<text x="1340.600" y="759.700" text-anchor="middle" font-family="Liberation Sans, sans-serif" font-weight="bold" font-size="11" fill="#fff">2</text>
<rect x="1361.500" y="728" width="1" height="40" fill="#8a8a84"/>
</svg>
<div class="abs" id="wtemp" style="left:937px;top:738.900px;color:#fff;font-size:13px;line-height:20px;white-space:nowrap;letter-spacing:-0.350px">9°C</div>
<div class="abs" id="wtxt" style="left:967.400px;top:738.900px;color:#fff;font-size:13px;line-height:20px;white-space:nowrap;letter-spacing:0.120px">Rain showers</div>
<div class="abs" id="lang" style="left:1218.600px;top:737.800px;color:#fff;font-size:11.700px;line-height:20px;white-space:nowrap;letter-spacing:-0.650px">РУС</div>
<div class="abs" id="clk" style="left:1240px;width:80px;text-align:center;top:729.800px;color:#fff;font-size:12px;line-height:18px;white-space:nowrap;letter-spacing:-0.650px">11:43<br>27.04.2023</div>
<!--/TASKBAR-->
</body>
</html>
